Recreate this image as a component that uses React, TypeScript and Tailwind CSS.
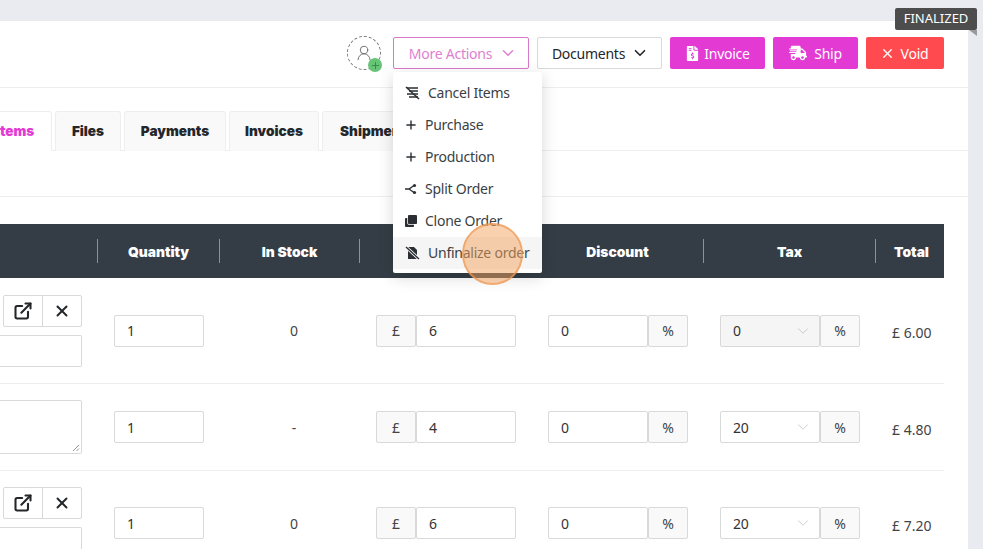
import { ChevronDown, Plus, UserRound, X, ExternalLink } from "lucide-react";
import { FaFileInvoiceDollar, FaShippingFast, FaClone } from "react-icons/fa";

const CancelIcon = () => (
  <svg width="15" height="14" viewBox="0 0 15 14" fill="none" stroke="#2b2f33" strokeWidth="1.6">
    <path d="M2 2h11M4 5h9M2 8h11M4 11h9" />
    <path d="M1 1l13 12" />
  </svg>
);
const UnfinalizeIcon = () => (
  <svg width="15" height="14" viewBox="0 0 15 14">
    <path d="M3 1h6l3 3v9H3z" fill="#2b2f33" />
    <path d="M1 1l13 12" stroke="#fff" strokeWidth="3" />
    <path d="M1 1l13 12" stroke="#2b2f33" strokeWidth="1.4" />
  </svg>
);
const SplitIcon = () => (
  <svg width="12" height="12" viewBox="0 0 12 12" fill="none" stroke="#2b2f33" strokeWidth="1.4">
    <path d="M0 6h4l5-3.5M4 6l5 3.5" />
    <circle cx="9.5" cy="2.5" r="1.6" fill="#2b2f33" stroke="none" />
    <circle cx="9.5" cy="9.5" r="1.6" fill="#2b2f33" stroke="none" />
  </svg>
);
const PlusIcon = () => (
  <span className="w-[12px] flex justify-center">
    <Plus size={14} strokeWidth={2.4} color="#2b2f33" className="shrink-0" />
  </span>
);

const menu = [
  { icon: <CancelIcon />, label: "Cancel Items" },
  { icon: <PlusIcon />, label: "Purchase" },
  { icon: <PlusIcon />, label: "Production" },
  { icon: <SplitIcon />, label: "Split Order" },
  { icon: <FaClone size={12} color="#2b2f33" />, label: "Clone Order" },
  { icon: <UnfinalizeIcon />, label: "Unfinalize order", active: true },
];

const boxBorder = "border border-[#d9d9d9] rounded-[2px]";

function Field({ value, className = "" }: { value: string; className?: string }) {
  return (
    <div className={`h-[32px] flex items-center pl-[12px] text-[14px] text-[#333] bg-white ${boxBorder} ${className}`}>
      {value}
    </div>
  );
}
function Addon({ children }: { children: string }) {
  return (
    <div className={`h-[32px] w-[40px] shrink-0 flex items-center justify-center text-[14px] text-[#444] bg-[#f9f9f9] ${boxBorder}`}>
      {children}
    </div>
  );
}
function ItemActions() {
  return (
    <div className="flex flex-col gap-[8px] items-end w-[97px] pr-[15px] shrink-0">
      <div className={`flex h-[32px] w-[79px] ${boxBorder}`}>
        <div className="w-[39px] flex items-center justify-center border-r border-[#d9d9d9]">
          <ExternalLink size={20} strokeWidth={2.5} color="#23272b" />
        </div>
        <div className="flex-1 flex items-center justify-center">
          <X size={18} strokeWidth={2.6} color="#23272b" />
        </div>
      </div>
      <div className={`h-[32px] w-[82px] ${boxBorder} border-l-0 rounded-l-none`} />
    </div>
  );
}
function ItemNote() {
  return (
    <div className="w-[97px] pr-[15px] shrink-0">
      <div className={`relative h-[54px] w-[82px] ${boxBorder} border-l-0 rounded-l-none`}>
        <svg className="absolute right-[1px] bottom-[1px]" width="8" height="8" viewBox="0 0 8 8" stroke="#777" strokeWidth="0.8">
          <path d="M1 7l6-6M4.5 7l2.5-2.5" />
        </svg>
      </div>
    </div>
  );
}

function Row({ left, stock, price, tax, taxDisabled, total, h, last }: {
  left: React.ReactNode; stock: string; price: string; tax: string; taxDisabled?: boolean; total: string; h: string; last?: boolean;
}) {
  return (
    <div className={`flex items-center shrink-0 ${h} ${last ? "" : "border-b border-[#eeeeee]"}`}>
      {left}
      <div className="w-[122px] pl-[17px] shrink-0"><Field value="1" className="w-[90px]" /></div>
      <div className="w-[140px] shrink-0 pl-[10px] text-center text-[14px] text-[#444]">{stock}</div>
      <div className="w-[172px] pl-[17px] shrink-0 flex">
        <Addon>£</Addon>
        <Field value={price} className="w-[100px]" />
      </div>
      <div className="w-[172px] pl-[17px] shrink-0 flex">
        <Field value="0" className="w-[100px]" />
        <Addon>%</Addon>
      </div>
      <div className="w-[172px] pl-[17px] shrink-0 flex">
        <div className={`h-[32px] w-[100px] flex items-center justify-between pl-[12px] pr-[7px] text-[14px] text-[#333] ${boxBorder} ${taxDisabled ? "bg-[#f5f5f5]" : "bg-white"}`}>
          {tax}
          <ChevronDown size={18} strokeWidth={0.9} color="#b5b5b5" />
        </div>
        <Addon>%</Addon>
      </div>
      <div className="flex-1 pl-[17px] pt-[4px] text-[14px] tracking-normal text-[#444] whitespace-nowrap">{total}</div>
    </div>
  );
}

function Tab({ label, w, active }: { label: string; w: string; active?: boolean }) {
  return (
    <div className={`${w} h-[40px] -mb-px shrink-0 flex items-center justify-center font-['Inter',sans-serif] tracking-normal text-[13.6px] font-black rounded-t-[3px] border border-[#eeeeee] ${active ? "bg-white text-[#e23ad3] border-b-white pt-[1px]" : "bg-[#f9f9f9] text-[#23272b] border-b-0"}`}>
      {label}
    </div>
  );
}

function Head({ label, w, sep = true, className = "" }: { label: string; w: string; sep?: boolean; className?: string }) {
  return (
    <div className={`${w} shrink-0 flex items-center justify-center h-[24px] pt-[2px] font-['Inter',sans-serif] tracking-normal text-[13.8px] font-black text-white ${sep ? "border-l border-[#8a9197]" : ""} ${className}`}>
      {label}
    </div>
  );
}

export default function App() {
  return (
    <div className="relative w-[983px] h-[549px] overflow-hidden bg-[#e9ebf0] pt-[21px] font-['Noto_Sans',sans-serif] tracking-[-0.25px]">
      <div className="w-[968px] h-[528px] bg-white flex flex-col overflow-hidden">
        <div className="h-[67px] shrink-0 border-b border-[#eeeeee] flex items-center justify-end gap-[8px] pr-[24px] pb-[2px]">
          <div className="relative w-[34px] h-[34px] mr-[4px] rounded-full border border-dashed border-[#777] flex items-center justify-center">
            <UserRound size={18} strokeWidth={1.2} color="#666" />
            <div className="absolute left-[20px] top-[21px] w-[14px] h-[14px] rounded-full bg-[#66c477] flex items-center justify-center">
              <Plus size={11} strokeWidth={1.6} color="#2d7a3e" />
            </div>
          </div>
          <div className="w-[136px] h-[32px] flex items-center justify-center gap-[7px] pl-[4px] text-[14px] text-[#e07fd2] border border-[#d878c8] rounded-[2px]">
            More Actions <ChevronDown size={18} strokeWidth={2} />
          </div>
          <div className="w-[125px] h-[32px] flex items-center justify-center gap-[6px] pl-[2px] text-[14px] text-[#23272b] border border-[#d9d9d9] rounded-[2px]">
            Documents <ChevronDown size={18} strokeWidth={2.2} />
          </div>
          <div className="w-[95px] h-[32px] flex items-center justify-center gap-[4px] text-[14px] text-white bg-[#e23ad3] rounded-[2px]">
            <span className="w-[15px] flex justify-center"><FaFileInvoiceDollar size={15} /></span> Invoice
          </div>
          <div className="w-[85px] h-[32px] flex items-center justify-center gap-[7px] text-[14px] text-white bg-[#e23ad3] rounded-[2px]">
            <FaShippingFast size={18} /> Ship
          </div>
          <div className="w-[78px] h-[32px] flex items-center justify-center gap-[6px] pr-[2px] text-[14px] text-white bg-[#ff4b4f] rounded-[2px]">
            <X size={15} strokeWidth={2.2} /> Void
          </div>
        </div>

        <div className="h-[63px] shrink-0 flex items-end gap-[3px] -ml-[22px] border-b border-[#eeeeee]">
          <Tab label="Items" w="w-[74px]" active />
          <Tab label="Files" w="w-[66px]" />
          <Tab label="Payments" w="w-[102px]" />
          <Tab label="Invoices" w="w-[90px]" />
          <Tab label="Shipments" w="w-[110px]" />
        </div>

        <div className="h-[46px] shrink-0 border-b border-[#eeeeee]" />
        <div className="h-[27px] shrink-0" />

        <div className="w-[944px] flex flex-col flex-1">
          <div className="h-[54px] shrink-0 flex items-center bg-[#343d45]">
            <div className="w-[97px] shrink-0" />
            <Head label="Quantity" w="w-[122px]" />
            <Head label="In Stock" w="w-[140px]" />
            <Head label="" w="w-[172px]" />
            <Head label="Discount" w="w-[172px]" />
            <Head label="Tax" w="w-[172px]" />
            <Head label="Total" w="w-[69px]" className="pl-[3px]" />
          </div>
          <Row h="h-[106px]" left={<ItemActions />} stock="0" price="6" tax="0" taxDisabled total="£ 6.00" />
          <Row h="h-[87px]" left={<ItemNote />} stock="-" price="4" tax="20" total="£ 4.80" />
          <Row h="h-[104px]" left={<ItemActions />} stock="0" price="6" tax="20" total="£ 7.20" last />
        </div>
      </div>

      <div className="absolute left-[895px] top-[8px] w-[82px] h-[22px] bg-[#4d4d4d] rounded-[2px] flex items-center justify-center text-[13px] tracking-normal text-white">
        FINALIZED
      </div>
      <div className="absolute left-[969px] top-[30px] w-0 h-0 border-t-[6px] border-t-[#9a9a9a] border-l-[8px] border-l-transparent" />

      <div className="absolute left-[393px] top-[72px] w-[149px] h-[201px] bg-white rounded-[2px] py-[5px] shadow-[0_4px_16px_rgba(0,0,0,0.16)]">
        {menu.map((m) => (
          <div key={m.label} className={`h-[32px] flex items-center pl-[12px] gap-[8px] pb-[1px] text-[14px] text-[#3a3f44] ${m.active ? "bg-[#f5f5f5]" : ""}`}>
            {m.icon}
            {m.label}
          </div>
        ))}
      </div>

      <div className="absolute left-[462px] top-[223px] w-[61px] h-[62px] rounded-full bg-[#f4a460]/50 border-2 border-[#ee9a55]/70" />
    </div>
  );
}
